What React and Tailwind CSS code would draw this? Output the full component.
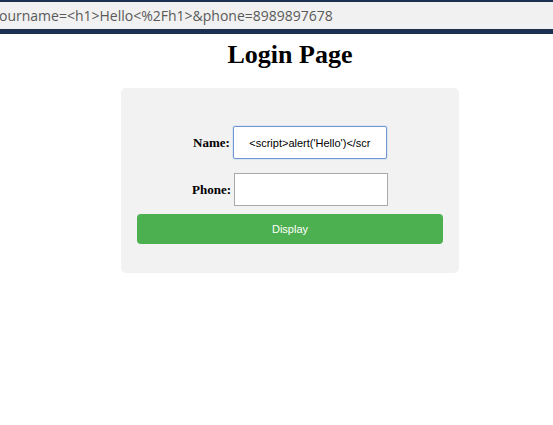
import React from 'react';

const serif = { fontFamily: '"Liberation Serif", "Times New Roman", serif' };

const App = () => {
  return (
    <div className="w-[553px] h-[425px] bg-white overflow-hidden">
      {/* Browser address bar */}
      <div className="h-[2px] bg-[#1c3152]"></div>
      <div className="h-[27px] bg-[#f1f1f2] flex items-center overflow-hidden">
        <span
          className="text-[14px] text-[#595959] whitespace-nowrap ml-[-1px]"
          style={{ fontFamily: '"Open Sans", "Noto Sans", sans-serif' }}
        >
          ourname=&lt;h1&gt;Hello&lt;%2Fh1&gt;&amp;phone=8989897678
        </span>
      </div>
      <div className="h-[5px] bg-[#1c3152]"></div>

      {/* Page */}
      <div className="pl-[27px] flex flex-col items-center">
        <h1 className="mt-[6px] text-[26px] leading-[30px] font-bold text-black" style={serif}>
          Login Page
        </h1>

        <div className="mt-[18px] w-[338px] bg-[#f2f2f2] rounded-[5px] px-4 pt-[38px] pb-[29px]">
          <div className="flex justify-center items-center gap-[3px]">
            <label className="text-[13px] font-bold text-black" style={serif}>Name:</label>
            <input
              readOnly
              value="<script>alert('Hello')</scr"
              className="w-[154px] h-[33px] bg-white border border-[#7097cf] rounded-[2px] shadow-[0_0_0_1px_#dbe6f4] text-center text-[11px] text-black outline-none"
              style={{ fontFamily: '"Liberation Sans", Arial, sans-serif' }}
            />
          </div>
          <div className="mt-[14px] flex justify-center items-center gap-[3px]">
            <label className="text-[13px] font-bold text-black" style={serif}>Phone:</label>
            <input
              readOnly
              value=""
              className="w-[154px] h-[33px] bg-white border border-[#a9a9a9] outline-none"
            />
          </div>
          <button
            className="mt-[8px] w-full h-[30px] bg-[#4caf50] rounded-[4px] text-white text-[11px]"
            style={{ fontFamily: '"Liberation Sans", Arial, sans-serif' }}
          >
            Display
          </button>
        </div>
      </div>
    </div>
  );
};

export default App;
